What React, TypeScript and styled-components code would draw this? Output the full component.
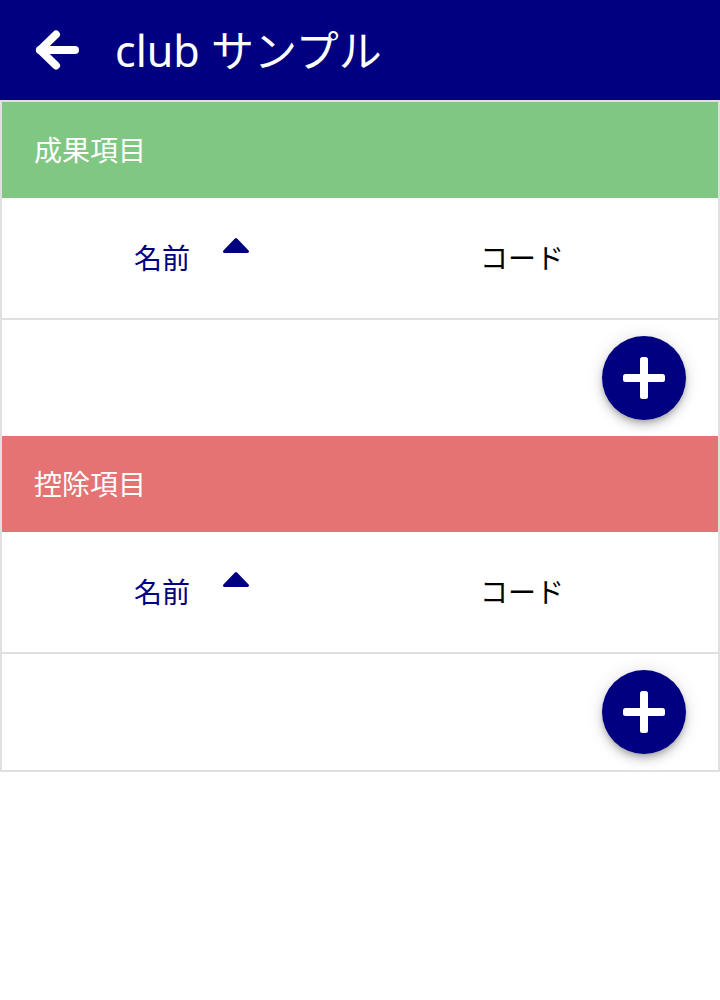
import React from "react";
import styled, { createGlobalStyle } from "styled-components";

const GlobalStyle = createGlobalStyle`
  html, body {
    margin: 0;
    padding: 0;
    background: #ffffff;
    font-family: "Noto Sans", "Noto Sans CJK JP", sans-serif;
  }
  * { box-sizing: border-box; }
`;

const NAVY = "#000080";
const LINE = "#e0e0e0";

const Page = styled.div`
  width: 720px;
`;

const AppBar = styled.header`
  height: 100px;
  background: ${NAVY};
  display: flex;
  align-items: center;
  padding-left: 34px;
  gap: 33px;
`;

const BackButton = styled.button`
  width: 48px;
  height: 48px;
  padding: 0;
  border: none;
  background: transparent;
  display: flex;
  align-items: center;
  justify-content: center;
  cursor: pointer;
`;

const Title = styled.h1`
  margin: 0;
  color: #ffffff;
  font-size: 43px;
  font-weight: 400;
  line-height: 1;
  font-family: "Noto Sans", "Noto Sans CJK JP", sans-serif;
`;

const Panel = styled.main`
  border: 2px solid ${LINE};
`;

const SectionHeader = styled.div<{ $bg: string }>`
  height: 96px;
  background: ${(p) => p.$bg};
  display: flex;
  align-items: center;
  padding-left: 32px;
  padding-bottom: 3px;
  color: #ffffff;
  font-size: 28px;
  font-family: "Noto Sans CJK JP", "Noto Sans", sans-serif;
`;

const HeaderRow = styled.div`
  height: 122px;
  border-bottom: 2px solid ${LINE};
  display: grid;
  grid-template-columns: 330px 330px;
  padding-left: 25px;
  padding-bottom: 3px;
  align-items: center;
  font-size: 28px;
  font-family: "Noto Sans CJK JP", "Noto Sans", sans-serif;
`;

const HeaderCell = styled.div<{ $active?: boolean }>`
  display: flex;
  align-items: center;
  justify-content: center;
  color: ${(p) => (p.$active ? NAVY : "#000000")};
`;

const SortIcon = styled.svg`
  margin-left: 32px;
  margin-bottom: 22px;
  flex: none;
`;

const FabRow = styled.div`
  height: 116px;
  display: flex;
  align-items: center;
  justify-content: flex-end;
  padding-right: 32px;
`;

const Fab = styled.button`
  width: 84px;
  height: 84px;
  border-radius: 50%;
  border: none;
  background: ${NAVY};
  display: flex;
  align-items: center;
  justify-content: center;
  padding: 0;
  box-shadow: 0 3px 5px -1px rgba(0, 0, 0, 0.2), 0 6px 10px 0 rgba(0, 0, 0, 0.14),
    0 1px 18px 0 rgba(0, 0, 0, 0.12);
  cursor: pointer;
`;

const BackIcon = () => (
  <svg width="48" height="48" viewBox="0 0 48 48">
    <g
      fill="none"
      stroke="#ffffff"
      strokeWidth="8"
      strokeLinecap="round"
      strokeLinejoin="round"
    >
      <path d="M6 24 H41" />
      <path d="M22 8.5 L6 24 L22 39.5" />
    </g>
  </svg>
);

const PlusIcon = () => (
  <svg width="42" height="42" viewBox="0 0 42 42">
    <rect x="17" y="0" width="8" height="42" rx="2.5" fill="#ffffff" />
    <rect x="0" y="17" width="42" height="8" rx="2.5" fill="#ffffff" />
  </svg>
);

const Caret = () => (
  <SortIcon width="28" height="17" viewBox="0 0 28 17">
    <polygon
      points="2.5,14.5 14,2.5 25.5,14.5"
      fill={NAVY}
      stroke={NAVY}
      strokeWidth="3"
      strokeLinejoin="round"
    />
  </SortIcon>
);

type SectionProps = { title: string; color: string };

const Section = ({ title, color }: SectionProps) => (
  <section>
    <SectionHeader $bg={color}>{title}</SectionHeader>
    <HeaderRow>
      <HeaderCell $active>
        名前
        <Caret />
      </HeaderCell>
      <HeaderCell>コード</HeaderCell>
    </HeaderRow>
    <FabRow>
      <Fab aria-label="追加">
        <PlusIcon />
      </Fab>
    </FabRow>
  </section>
);

export default function App() {
  return (
    <Page>
      <GlobalStyle />
      <AppBar>
        <BackButton aria-label="戻る">
          <BackIcon />
        </BackButton>
        <Title>club サンプル</Title>
      </AppBar>
      <Panel>
        <Section title="成果項目" color="#81c784" />
        <Section title="控除項目" color="#e57373" />
      </Panel>
    </Page>
  );
}
